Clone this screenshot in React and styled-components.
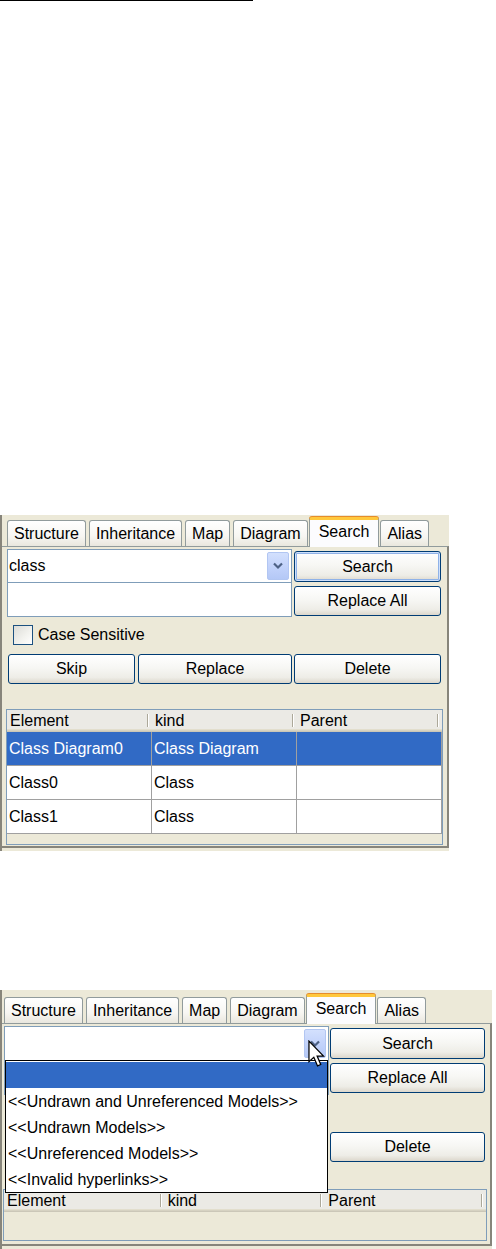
import React from "react";
import styled, { createGlobalStyle } from "styled-components";

const GlobalStyle = createGlobalStyle`
  html, body {
    margin: 0;
    padding: 0;
    background: #fff;
  }
  body {
    font-family: "Liberation Sans", Arial, sans-serif;
    font-size: 16px;
    color: #000;
  }
`;

const Page = styled.div`
  display: flex;
  flex-direction: column;
  width: 496px;
  height: 1249px;
  overflow: hidden;
`;

const TopRule = styled.div`
  width: 253px;
  height: 1px;
  background: #000;
  flex-shrink: 0;
`;

const Panel = styled.div`
  box-sizing: border-box;
  flex-shrink: 0;
  width: ${(p) => p.$width}px;
  height: ${(p) => p.$height}px;
  margin-top: ${(p) => p.$top}px;
  padding-top: ${(p) => p.$padTop}px;
  padding-bottom: 3px;
  background: #ece9d8;
  border-left: 2px solid #87857b;
  display: flex;
  flex-direction: column;
`;

const TabStrip = styled.div`
  display: flex;
  align-items: flex-end;
  gap: 3px;
  height: 26px;
  padding-left: ${(p) => p.$padLeft}px;
`;

const Tab = styled.div`
  box-sizing: border-box;
  height: 26px;
  padding: 0 6px;
  line-height: 25px;
  border: 1px solid #919b9c;
  border-bottom: none;
  border-radius: 3px 3px 0 0;
  background: linear-gradient(180deg, #ffffff 0%, #f7f6f2 60%, #e9e7de 100%);
  white-space: nowrap;
`;

const ActiveTab = styled(Tab)`
  position: relative;
  z-index: 1;
  height: 30px;
  margin: 0 -2px -1px;
  padding: 0 9px;
  line-height: 24px;
  background: #fcfcfe;
  border-top: 3px solid #ffc83c;
  box-shadow: 0 -1px 0 #e68b2c;
`;

const TabBody = styled.div`
  flex: 1;
  box-sizing: border-box;
  display: flex;
  flex-direction: column;
  padding: 2px ${(p) => p.$padRight}px 0 ${(p) => p.$padLeft}px;
  border-top: 1px solid #919b9c;
  border-right: 2px solid #87857b;
  border-bottom: 2px solid #87857b;
`;

const TopGrid = styled.div`
  display: grid;
  grid-template-columns: ${(p) => p.$left}px ${(p) => p.$right}px;
  column-gap: ${(p) => p.$gap}px;
`;

const FieldColumn = styled.div`
  display: flex;
  flex-direction: column;
`;

const Combo = styled.div`
  position: relative;
  box-sizing: border-box;
  height: ${(p) => p.$h}px;
  display: flex;
  align-items: center;
  padding-left: 1px;
  background: #fff;
  border: 1px solid #7f9db9;
`;

const DropButton = styled.div`
  position: absolute;
  top: 2px;
  right: 2px;
  bottom: 2px;
  width: 22px;
  box-sizing: border-box;
  display: flex;
  align-items: center;
  justify-content: center;
  border: 1px solid #b2c6f2;
  border-radius: 2px;
  background: linear-gradient(180deg, #d3e0fd 0%, #c3d3fb 50%, #b4c8f6 100%);
`;

const TextField = styled.div`
  box-sizing: border-box;
  height: 35px;
  margin-top: -1px;
  background: #fff;
  border: 1px solid #7f9db9;
`;

const ButtonColumn = styled.div`
  display: flex;
  flex-direction: column;
  gap: 4px;
  padding-top: 2px;
`;

const Button = styled.button`
  box-sizing: border-box;
  height: ${(p) => p.$h || 30}px;
  padding: 0;
  font: inherit;
  font-size: 16px;
  color: #000;
  border: 1px solid #003c74;
  border-radius: 3px;
  background: linear-gradient(180deg, #ffffff 0%, #f7f7f4 45%, #eeede7 80%, #dcd7cc 100%);
  box-shadow: ${(p) =>
    p.$focus ? "inset 0 0 0 1px #cee0fb, inset 0 0 0 2px #8fb2e8" : "none"};
`;

const CheckRow = styled.label`
  display: flex;
  align-items: center;
  gap: 5px;
  height: 20px;
  margin-top: 8px;
  padding-left: 6px;
  visibility: ${(p) => (p.$covered ? "hidden" : "visible")};
`;

const CheckBox = styled.span`
  box-sizing: border-box;
  width: 20px;
  height: 20px;
  border: 1px solid #1c5180;
  background: linear-gradient(135deg, #dcdcd7 0%, #f3f3ef 60%, #ffffff 100%);
`;

const ButtonRow = styled.div`
  display: grid;
  grid-template-columns: ${(p) => p.$left}px ${(p) => p.$right}px;
  column-gap: ${(p) => p.$gap}px;
  margin-top: 9px;
`;

const LeftButtons = styled.div`
  display: grid;
  grid-template-columns: 127px 1fr;
  column-gap: 3px;
  padding-left: 1px;
  visibility: ${(p) => (p.$covered ? "hidden" : "visible")};
`;

const Table = styled.div`
  box-sizing: border-box;
  height: ${(p) => p.$height}px;
  margin: ${(p) => p.$gapTop}px -2px 0 -1px;
  border: 1px solid #7f9db9;
  background: #ece9d8;
  overflow: hidden;
`;

const HeaderRow = styled.div`
  display: grid;
  grid-template-columns: 1fr 1fr 1fr;
  height: 22px;
`;

const HeaderCell = styled.div`
  position: relative;
  padding-left: 3px;
  line-height: 21px;
  background: #ebeae5;
  box-shadow: inset 0 -1px #cbc7b8, inset 0 -2px #d6d2c2, inset 0 -3px #e2decd;

  &::after {
    content: "";
    position: absolute;
    right: 4px;
    top: 4px;
    bottom: 5px;
    width: 1px;
    background: #aca899;
    box-shadow: 1px 0 #fff;
  }
`;

const Row = styled.div`
  display: grid;
  grid-template-columns: 1fr 1fr 1fr;
  height: 34px;
  box-sizing: border-box;
  border-bottom: 1px solid #a0a0a0;
  background: ${(p) => (p.$selected ? "#316ac5" : "#fff")};
  color: ${(p) => (p.$selected ? "#fff" : "#000")};
`;

const Cell = styled.div`
  display: flex;
  align-items: center;
  padding-left: 2px;
  border-right: 1px solid #a0a0a0;
  white-space: nowrap;
  overflow: hidden;
`;

const DropList = styled.div`
  position: absolute;
  top: 100%;
  left: 0;
  right: 0;
  z-index: 5;
  box-sizing: border-box;
  height: 133px;
  padding-top: 1px;
  border: 1px solid #000;
  background: #fff;
`;

const DropItem = styled.div`
  height: 26px;
  line-height: 27px;
  padding-left: 2px;
  white-space: nowrap;
  background: ${(p) => (p.$selected ? "#316ac5" : "#fff")};
  color: ${(p) => (p.$selected ? "#fff" : "#000")};
`;

const Cursor = styled.svg`
  position: absolute;
  left: 303px;
  top: 13px;
  z-index: 6;
`;

const Chevron = () => (
  <svg width="10" height="8" viewBox="0 0 10 8">
    <path d="M1 1.5 L5 5.5 L9 1.5" fill="none" stroke="#4d6185" strokeWidth="2.2" />
  </svg>
);

const tabs = ["Structure", "Inheritance", "Map", "Diagram", "Search", "Alias"];

const dropItems = [
  "",
  "<<Undrawn and Unreferenced Models>>",
  "<<Undrawn Models>>",
  "<<Unreferenced Models>>",
  "<<Invalid hyperlinks>>",
];

const SearchPanel = ({ cfg, query, rows, open }) => (
  <Panel $width={cfg.width} $height={cfg.height} $top={cfg.top} $padTop={cfg.padTop}>
    <TabStrip $padLeft={cfg.tabLeft}>
      {tabs.map((t) =>
        t === "Search" ? <ActiveTab key={t}>{t}</ActiveTab> : <Tab key={t}>{t}</Tab>
      )}
    </TabStrip>
    <TabBody $padLeft={cfg.padL} $padRight={cfg.padR}>
      <TopGrid $left={cfg.left} $right={cfg.right} $gap={cfg.gap}>
        <FieldColumn>
          <Combo $h={cfg.comboH}>
            {query}
            <DropButton>
              <Chevron />
            </DropButton>
            {open && (
              <>
                <DropList>
                  {dropItems.map((d, i) => (
                    <DropItem key={i} $selected={i === 0}>
                      {d}
                    </DropItem>
                  ))}
                </DropList>
                <Cursor width="18" height="28" viewBox="0 0 13 20">
                  <path
                    d="M0.7 0.7 L0.7 15.5 L4.2 12.3 L6.9 18.6 L9.2 17.6 L6.6 11.5 L11.2 11.5 Z"
                    fill="#fff"
                    stroke="#000"
                    strokeWidth="0.9"
                    strokeLinejoin="miter"
                  />
                </Cursor>
              </>
            )}
          </Combo>
          <TextField />
        </FieldColumn>
        <ButtonColumn>
          <Button $h={31} $focus={!open}>Search</Button>
          <Button $h={30}>Replace All</Button>
        </ButtonColumn>
      </TopGrid>
      <CheckRow $covered={open}>
        <CheckBox />
        Case Sensitive
      </CheckRow>
      <ButtonRow $left={cfg.left} $right={cfg.right} $gap={cfg.gap}>
        <LeftButtons $covered={open}>
          <Button>Skip</Button>
          <Button>Replace</Button>
        </LeftButtons>
        <Button>Delete</Button>
      </ButtonRow>
      <Table $height={cfg.tableHeight} $gapTop={cfg.tableGap}>
        <HeaderRow>
          <HeaderCell>Element</HeaderCell>
          <HeaderCell>kind</HeaderCell>
          <HeaderCell>Parent</HeaderCell>
        </HeaderRow>
        {rows.map((r, i) => (
          <Row key={r.element} $selected={i === 0}>
            <Cell>{r.element}</Cell>
            <Cell>{r.kind}</Cell>
            <Cell>{r.parent}</Cell>
          </Row>
        ))}
      </Table>
    </TabBody>
  </Panel>
);

const results = [
  { element: "Class Diagram0", kind: "Class Diagram", parent: "" },
  { element: "Class0", kind: "Class", parent: "" },
  { element: "Class1", kind: "Class", parent: "" },
];

const first = {
  width: 449, height: 336, top: 514, padTop: 5, tabLeft: 5, comboH: 34,
  padL: 5, padR: 6, left: 285, right: 147, gap: 2, tableHeight: 136, tableGap: 25,
};

const second = {
  width: 492, height: 259, top: 139, padTop: 7, tabLeft: 2, comboH: 35,
  padL: 2, padR: 5, left: 325, right: 155, gap: 1, tableHeight: 52, tableGap: 27,
};

export default function App() {
  return (
    <>
      <GlobalStyle />
      <Page>
        <TopRule />
        <SearchPanel cfg={first} query="class" rows={results} />
        <SearchPanel cfg={second} query="" rows={[]} open />
      </Page>
    </>
  );
}
